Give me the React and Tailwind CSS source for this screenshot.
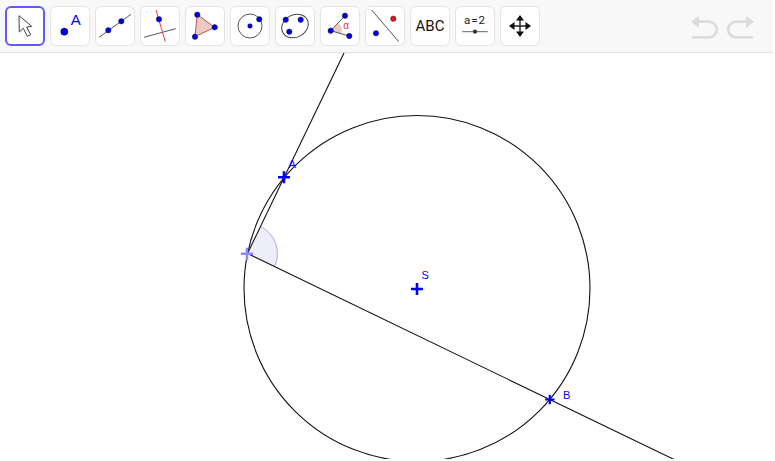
import { useState } from 'react';

const BLUE = '#0000ff';

function Dot({ x, y, r = 2.7, fill = '#0000e8' }) {
  return <circle cx={x} cy={y} r={r} fill={fill} stroke="#1a1a2a" strokeWidth="0.5" />;
}

function ToolIcon({ children }) {
  return (
    <svg viewBox="0 0 40 40" className="w-10 h-10 block" fontFamily="'Liberation Sans', sans-serif">
      {children}
    </svg>
  );
}

const tools = [
  {
    id: 'move',
    icon: (
      <path
        d="M14 9.7 L14.3 26 L18.3 22.3 L22.3 30.3 L25.7 28.7 L21.7 21 L26.7 20.3 Z"
        fill="#fff"
        stroke="#444"
        strokeWidth="1"
        strokeLinejoin="round"
      />
    ),
  },
  {
    id: 'point',
    icon: (
      <>
        <Dot x={14.3} y={25.7} r={3.6} />
        <text x={25.7} y={19} fontSize="15" fill={BLUE} textAnchor="middle">A</text>
      </>
    ),
  },
  {
    id: 'line',
    icon: (
      <>
        <line x1="4" y1="31.3" x2="36" y2="8.3" stroke="#555" strokeWidth="1" />
        <Dot x={13.3} y={24.3} />
        <Dot x={26.3} y={15.3} />
      </>
    ),
  },
  {
    id: 'perpendicular',
    icon: (
      <>
        <line x1="4" y1="31.3" x2="35.7" y2="22.7" stroke="#555" strokeWidth="1" />
        <line x1="16" y1="4" x2="25.3" y2="35.7" stroke="#e8403c" strokeWidth="1" />
        <Dot x={19} y={13.3} />
      </>
    ),
  },
  {
    id: 'polygon',
    icon: (
      <>
        <polygon points="12.3,8.7 29.7,21.3 10,30.7" fill="#eccac4" stroke="#b5574c" strokeWidth="1" />
        <Dot x={12.3} y={8.7} />
        <Dot x={29.7} y={21.3} />
        <Dot x={10} y={30.7} />
      </>
    ),
  },
  {
    id: 'circle',
    icon: (
      <>
        <circle cx="20" cy="20" r="12" fill="none" stroke="#555" strokeWidth="1" />
        <Dot x={20} y={20} r={2.3} />
        <Dot x={29.3} y={13.3} />
      </>
    ),
  },
  {
    id: 'ellipse',
    icon: (
      <>
        <ellipse cx="20" cy="20" rx="13.8" ry="11.2" transform="rotate(-28 20 20)" fill="none" stroke="#444" strokeWidth="1" />
        <Dot x={10.7} y={13.7} />
        <Dot x={25.7} y={13.7} />
        <Dot x={14.3} y={25.7} />
      </>
    ),
  },
  {
    id: 'angle',
    icon: (
      <>
        <path d="M10.7 24.7 L18.3 16.7 A11 11 0 0 1 21.3 27.7 Z" fill="#eccac4" />
        <line x1="10.7" y1="24.7" x2="25" y2="9.7" stroke="#555" strokeWidth="1" />
        <line x1="10.7" y1="24.7" x2="29.3" y2="30" stroke="#555" strokeWidth="1" />
        <Dot x={10.7} y={24.7} />
        <Dot x={25} y={9.7} />
        <Dot x={29.3} y={30} />
        <text x={26.2} y={23} fontSize="10" fill="#e0392f" textAnchor="middle">α</text>
      </>
    ),
  },
  {
    id: 'reflect',
    icon: (
      <>
        <line x1="6.7" y1="4" x2="33.7" y2="35.7" stroke="#555" strokeWidth="1" />
        <Dot x={28.3} y={12.7} fill="#f01414" />
        <Dot x={11} y={27.3} />
      </>
    ),
  },
  {
    id: 'text',
    icon: <text x={20} y={25} fontSize="15" fontFamily="Roboto, sans-serif" fill="#111" textAnchor="middle">ABC</text>,
  },
  {
    id: 'slider',
    icon: (
      <>
        <text x={20} y={18.4} fontSize="11.5" fontFamily="Roboto, sans-serif" letterSpacing="1" fill="#222" textAnchor="middle">a=2</text>
        <line x1="7.3" y1="25.7" x2="32.7" y2="25.7" stroke="#666" strokeWidth="1" />
        <circle cx="20" cy="25.7" r="2.1" fill="#333" />
      </>
    ),
  },
  {
    id: 'pan',
    icon: (
      <>
        <path d="M20 11 V29 M11 20 H29" stroke="#222" strokeWidth="1.4" />
        <path
          d="M20 9 L24 14.5 H16 Z M20 31 L24 25.5 H16 Z M9 20 L14.5 16 V24 Z M31 20 L25.5 16 V24 Z"
          fill="#111"
        />
      </>
    ),
  },
];

function HistoryButtons() {
  return (
    <div className="flex items-center gap-[5px] mr-[18px]">
      <svg viewBox="0 0 30 30" className="w-[30px] h-[30px] block">
        <path d="M9 10.7 H19 A7.8 7.8 0 0 1 19 26.3 H2.3" fill="none" stroke="#dcdcdc" strokeWidth="2.7" />
        <path d="M1 10.7 L9 4.7 V17 Z" fill="#dcdcdc" />
      </svg>
      <svg viewBox="0 0 30 30" className="w-[30px] h-[30px] block">
        <path d="M21 10.7 H11 A7.8 7.8 0 0 0 11 26.3 H27.7" fill="none" stroke="#dcdcdc" strokeWidth="2.7" />
        <path d="M29 10.7 L21 4.7 V17 Z" fill="#dcdcdc" />
      </svg>
    </div>
  );
}

function Toolbar() {
  const [active, setActive] = useState('move');

  return (
    <div className="w-[773px] h-[53px] shrink-0 flex items-center justify-between bg-[#f8f8f8] border-b border-[#e0e0e0] pl-[5px]">
      <div className="flex gap-[5px]">
        {tools.map((t) => (
          <button
            key={t.id}
            onClick={() => setActive(t.id)}
            className={
              active === t.id
                ? 'w-10 h-10 p-0 bg-white rounded-md border-2 border-[#6557ff] overflow-hidden flex items-center justify-center'
                : 'w-10 h-10 p-0 bg-white rounded-md border border-[#e4e4e4] overflow-hidden flex items-center justify-center'
            }
          >
            <div className="shrink-0">
              <ToolIcon>{t.icon}</ToolIcon>
            </div>
          </button>
        ))}
      </div>
      <HistoryButtons />
    </div>
  );
}

function Cross({ x, y, color = BLUE, size = 6, width = 2.6 }) {
  return (
    <path
      d={`M${x - size} ${y} H${x + size} M${x} ${y - size} V${y + size}`}
      stroke={color}
      strokeWidth={width}
      fill="none"
    />
  );
}

// construction drawing, coordinates relative to the canvas (toolbar is 53px)
function Construction() {
  return (
    <svg viewBox="0 0 773 406" className="w-[773px] h-[406px] block" fontFamily="'Liberation Sans', sans-serif">
      <path d="M247.5 200.5 L274.5 213.5 A30 30 0 0 0 260.5 173.5 Z" fill="#eeeefb" stroke="none" />
      <path d="M274.5 213.5 A30 30 0 0 0 260.5 173.5" fill="none" stroke="#a8a8f4" strokeWidth="1" />
      <circle cx="417" cy="235.5" r="173" fill="none" stroke="#111" strokeWidth="1.1" />
      <line x1="344" y1="0" x2="247.5" y2="200.5" stroke="#111" strokeWidth="1.1" />
      <line x1="247.5" y1="200.5" x2="700" y2="419" stroke="#111" strokeWidth="1.1" />
      <Cross x={284} y={124.3} />
      <Cross x={417} y={236} />
      <Cross x={549.8} y={346.5} size={4.7} width={2.2} />
      <Cross x={247} y={200.7} color="#8a8aff" />
      <text x={288.5} y={115.3} fontSize="11" fill={BLUE}>A</text>
      <text x={421.5} y={226} fontSize="11" fill={BLUE}>S</text>
      <text x={563} y={346} fontSize="11" fill={BLUE}>B</text>
    </svg>
  );
}

export default function App() {
  return (
    <div className="w-[775px] h-[461px] flex flex-col bg-white overflow-hidden">
      <Toolbar />
      <Construction />
    </div>
  );
}
